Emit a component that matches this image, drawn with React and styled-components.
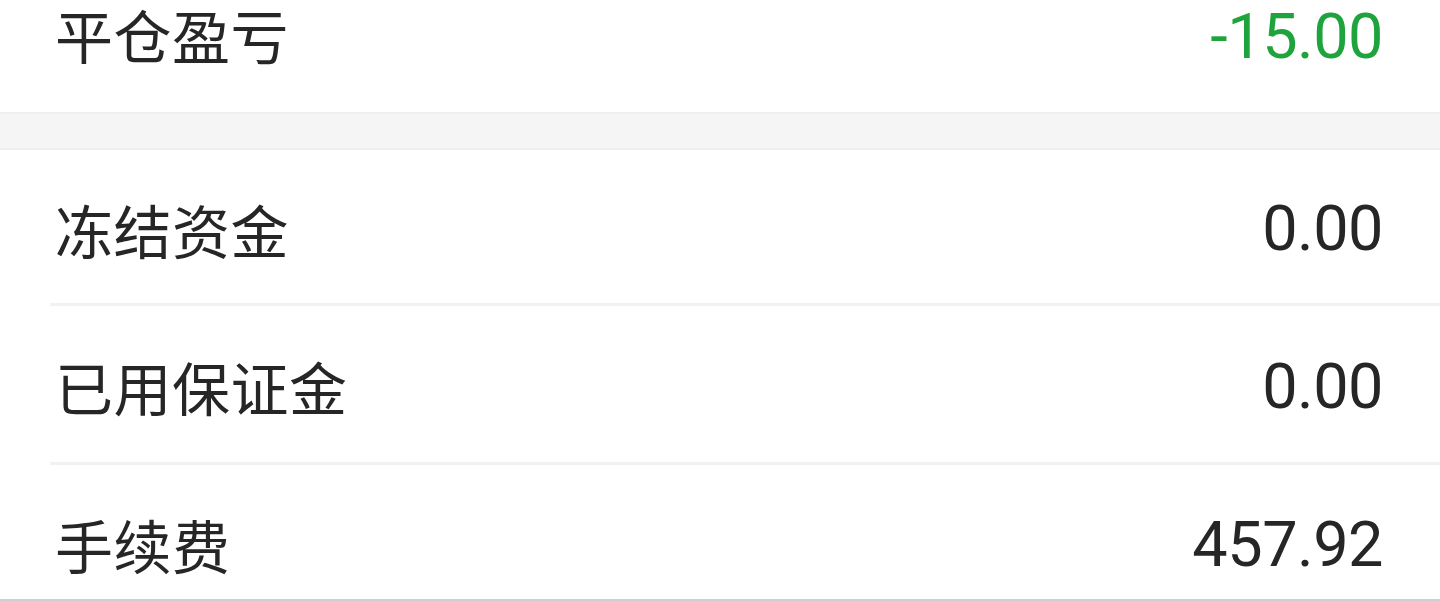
import React from "react";
import styled, { createGlobalStyle } from "styled-components";

const GlobalStyle = createGlobalStyle`
  html, body {
    margin: 0;
    padding: 0;
    background: #ffffff;
  }
`;

const Screen = styled.div`
  height: 601px;
  width: 100%;
  display: flex;
  flex-direction: column;
  overflow: hidden;
  background: #ffffff;
  font-family: "Noto Sans CJK SC", "Noto Sans", sans-serif;
`;

const Scroller = styled.div`
  flex: 1;
  overflow: hidden;
`;

const Section = styled.section`
  background: #ffffff;
`;

const Gap = styled.div`
  height: 34px;
  background: #f5f5f5;
  border-top: 2px solid #efefef;
  border-bottom: 2px solid #eeeeee;
`;

const Row = styled.div`
  height: ${p => p.height || 153}px;
  display: flex;
  align-items: ${p => (p.top ? "flex-start" : "center")};
  justify-content: space-between;
  padding: ${p => (p.top ? "5px" : "4px")} 57px 0 55px;
  box-sizing: border-box;
`;

const Divider = styled.div`
  height: 3px;
  margin-left: 50px;
  background: #f2f2f2;
`;

const Label = styled.span`
  font-size: 58px;
  line-height: 1;
  color: #262626;
  letter-spacing: 0.5px;
`;

const Value = styled.span`
  font-family: Roboto, "Noto Sans", sans-serif;
  font-size: 63px;
  line-height: 1;
  letter-spacing: -0.5px;
  color: ${p => (p.tone === "down" ? "#1ea33d" : "#262626")};
`;

const BottomLine = styled.div`
  height: 2px;
  background: #cfcfcf;
  flex-shrink: 0;
`;

const rows = [
  { label: "冻结资金", value: "0.00", height: 153 },
  { label: "已用保证金", value: "0.00", height: 156 },
  { label: "手续费", value: "457.92", height: 154 },
];

export default function App() {
  return (
    <Screen>
      <GlobalStyle />
      <Scroller>
        <Section>
          <Row height={112} top>
            <Label>平仓盈亏</Label>
            <Value tone="down">-15.00</Value>
          </Row>
        </Section>
        <Gap />
        <Section>
          {rows.map((r, i) => (
            <React.Fragment key={r.label}>
              {i > 0 && <Divider />}
              <Row height={r.height}>
                <Label>{r.label}</Label>
                <Value>{r.value}</Value>
              </Row>
            </React.Fragment>
          ))}
        </Section>
      </Scroller>
      <BottomLine />
    </Screen>
  );
}
